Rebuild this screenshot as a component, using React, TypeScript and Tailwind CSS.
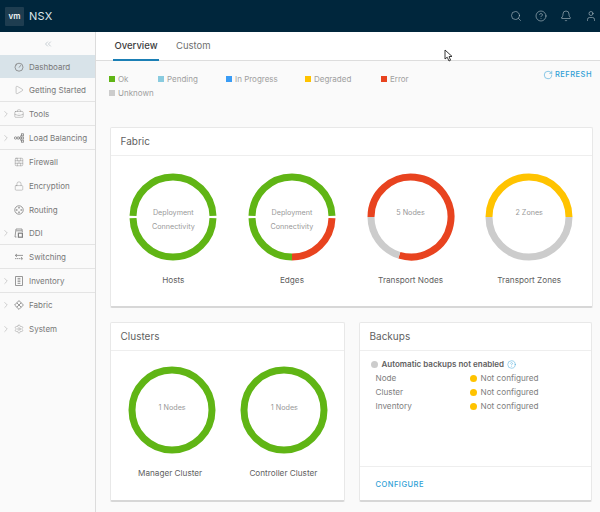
import React from 'react';
import { Search, CircleHelp, Bell, User, ChevronsLeft, ChevronRight, Play, BriefcaseBusiness, BrickWall, Lock, Settings, RotateCw } from 'lucide-react';

const GREEN = '#60b515';
const RED = '#e8431f';
const YELLOW = '#ffc300';
const GREY = '#cccccc';

type IconProps = { className?: string };

function Svg({ className, children }: IconProps & { children: React.ReactNode }) {
  return (
    <svg className={className} width="10" height="10" viewBox="0 0 10 10" fill="none" stroke="currentColor" strokeWidth="0.8">
      {children}
    </svg>
  );
}

const DashIcon = ({ className }: IconProps) => (
  <Svg className={className}>
    <circle cx="5" cy="5.2" r="4" />
    <path d="M5 5.6 L6.8 3.2 M2 2.4 L3 3.2" />
  </Svg>
);
const BalanceIcon = ({ className }: IconProps) => (
  <Svg className={className}>
    <circle cx="1.6" cy="5" r="1.2" />
    <circle cx="4.2" cy="5" r="1.2" />
    <path d="M5.4 5 L7.5 1.8 M5.4 5 H7.5 M5.4 5 L7.5 8.2" />
    <rect x="7.5" y="0.8" width="2" height="2" />
    <rect x="7.5" y="4" width="2" height="2" />
    <rect x="7.5" y="7.2" width="2" height="2" />
  </Svg>
);
const RouteIcon = ({ className }: IconProps) => (
  <Svg className={className}>
    <circle cx="5" cy="5" r="4.2" />
    <circle cx="5" cy="2.8" r="0.5" />
    <circle cx="5" cy="7.2" r="0.5" />
    <circle cx="2.8" cy="5" r="0.5" />
    <circle cx="7.2" cy="5" r="0.5" />
  </Svg>
);
const DdiIcon = ({ className }: IconProps) => (
  <Svg className={className}>
    <path d="M2.5 9 H1 L2 1 H8 L8.4 4" />
    <path d="M2.2 2.8 H8" />
    <rect x="4.4" y="5.2" width="4" height="4" strokeWidth="1.2" />
  </Svg>
);
const SwitchIcon = ({ className }: IconProps) => (
  <Svg className={className}>
    <path d="M9 3.4 H1.5 M3 2 L1.2 3.4 L3 4.8" />
    <path d="M1 6.6 H8.5 M7 5.2 L8.8 6.6 L7 8" strokeDasharray="1.4 0.5" />
  </Svg>
);
const InvIcon = ({ className }: IconProps) => (
  <Svg className={className}>
    <rect x="1.6" y="0.6" width="6.8" height="8.8" />
    <path d="M3.6 2.4 H6.4 M3.6 4 H6.4 M3.6 5.6 H6.4 M3.6 7.4 H6.4" />
  </Svg>
);
const FabricIcon = ({ className }: IconProps) => (
  <Svg className={className}>
    <path d="M5 0.6 L9.4 5 L5 9.4 L0.6 5 Z" />
    <path d="M2.8 2.8 L7.2 7.2 M7.2 2.8 L2.8 7.2" />
  </Svg>
);

const lucideProps = { size: 10, strokeWidth: 1 };

const navItems = [
  { label: 'Dashboard', icon: DashIcon, active: true, h: 'h-[23px]' },
  { label: 'Getting Started', icon: (p: IconProps) => <Play {...lucideProps} {...p} />, border: true, h: 'h-[24px]' },
  { label: 'Tools', icon: (p: IconProps) => <BriefcaseBusiness {...lucideProps} {...p} />, arrow: true, border: true, h: 'h-[24px]' },
  { label: 'Load Balancing', icon: BalanceIcon, arrow: true, border: true, h: 'h-[24px]' },
  { label: 'Firewall', icon: (p: IconProps) => <BrickWall {...lucideProps} {...p} />, h: 'h-[24px]' },
  { label: 'Encryption', icon: (p: IconProps) => <Lock {...lucideProps} {...p} />, h: 'h-[24px]' },
  { label: 'Routing', icon: RouteIcon, h: 'h-[23px]' },
  { label: 'DDI', icon: DdiIcon, arrow: true, border: true, h: 'h-[24px]' },
  { label: 'Switching', icon: SwitchIcon, border: true, h: 'h-[24px]' },
  { label: 'Inventory', icon: InvIcon, arrow: true, border: true, h: 'h-[24px]' },
  { label: 'Fabric', icon: FabricIcon, arrow: true, h: 'h-[24px]' },
  { label: 'System', icon: (p: IconProps) => <Settings {...lucideProps} {...p} />, arrow: true, h: 'h-[23px]' },
];

const legend = [
  { label: 'Ok', color: 'bg-[#60b515]', w: 'w-[49px]' },
  { label: 'Pending', color: 'bg-[#89cbdf]', w: 'w-[68px]' },
  { label: 'In Progress', color: 'bg-[#3a9cf5]', w: 'w-[79px]' },
  { label: 'Degraded', color: 'bg-[#ffc300]', w: 'w-[76px]' },
  { label: 'Error', color: 'bg-[#e8431f]', w: 'w-[60px]' },
  { label: 'Unknown', color: 'bg-[#cccccc]', w: 'w-[80px]' },
];

// angles in degrees, clockwise from 12 o'clock
function arc(from: number, to: number) {
  const r = 40;
  const pt = (a: number) => {
    const t = ((a - 90) * Math.PI) / 180;
    return `${44 + r * Math.cos(t)} ${44 + r * Math.sin(t)}`;
  };
  return `M ${pt(from)} A ${r} ${r} 0 ${to - from > 180 ? 1 : 0} 1 ${pt(to)}`;
}

type Seg = [number, number, string];

function Donut({ segs, lines, label, textTop = 'top-[33px]', labelShift = '' }: { segs: Seg[]; lines: string[]; label: string; textTop?: string; labelShift?: string }) {
  return (
    <div className="flex flex-col items-center">
      <div className="relative w-[88px] h-[88px]">
        <svg width="88" height="88" viewBox="0 0 88 88">
          {segs.map((s, i) => (
            <path key={i} d={arc(s[0], s[1])} fill="none" stroke={s[2]} strokeWidth="7" />
          ))}
        </svg>
        <div className={`absolute inset-x-0 ${textTop} text-center text-[7.2px] leading-[14px] text-[#999999]`}>
          {lines.map((l) => (
            <div key={l}>{l}</div>
          ))}
        </div>
      </div>
      <div className={`mt-[12px] text-[8.2px] leading-[14px] text-[#5f5f5f] whitespace-nowrap ${labelShift}`}>{label}</div>
    </div>
  );
}

function Card({ title, className, children }: { title: string; className: string; children: React.ReactNode }) {
  return (
    <div className={`bg-white rounded-[2px] border border-[#e8e8e8] border-b-[2px] border-b-[#d7d7d7] flex flex-col ${className}`}>
      <div className="h-[28px] shrink-0 border-b border-[#eeeeee] px-[10px] flex items-center text-[10px] text-[#5f5f5f]">{title}</div>
      {children}
    </div>
  );
}

function BackupRow({ name }: { name: string }) {
  return (
    <div className="flex items-center h-[14px] pl-[16px] text-[8.2px] text-[#808080]">
      <span className="w-[94px]">{name}</span>
      <span className="w-[7px] h-[7px] rounded-full bg-[#ffc300] mr-[4px]" />
      <span>Not configured</span>
    </div>
  );
}

export default function App() {
  return (
    <div className="relative w-[600px] h-[512px] overflow-hidden bg-[#fafafa] font-['Inter',sans-serif]">
      <header className="h-[32px] bg-[#00263c] flex items-center">
        <div className="ml-[5px] w-[19px] h-[19px] rounded-[1px] bg-[#1e3d50] flex items-center justify-center text-[#eef2f4] text-[8px] font-semibold">vm</div>
        <div className="ml-[5px] text-[11px] tracking-wide text-[#dfe6ea]">NSX</div>
        <div className="ml-auto flex items-center gap-[13px] pr-[3px] text-[#b6c3ca]">
          <Search size={12} strokeWidth={1.2} />
          <CircleHelp size={12} strokeWidth={1.2} />
          <Bell size={12} strokeWidth={1.2} />
          <User size={12} strokeWidth={1.2} />
        </div>
      </header>

      <div className="flex h-[480px]">
        <aside className="w-[96px] shrink-0 border-r border-[#dcdcdc] bg-[#fafafa]">
          <div className="h-[23px] flex items-center justify-center text-[#8a9aa5]">
            <ChevronsLeft size={10} strokeWidth={1.1} />
          </div>
          {navItems.map((item) => {
            const Icon = item.icon;
            return (
              <div
                key={item.label}
                className={`${item.h} flex items-center relative text-[8px] text-[#787878] ${item.active ? 'bg-[#d8e3e9]' : ''} ${item.border ? 'border-b border-[#e4e4e4]' : ''}`}
              >
                {item.arrow && <ChevronRight size={10} strokeWidth={1} className="absolute left-[1px] text-[#8c8c8c]" />}
                <Icon className="ml-[14px] mr-[5px] text-[#808080]" />
                <span className="whitespace-nowrap">{item.label}</span>
              </div>
            );
          })}
        </aside>

        <main className="flex-1">
          <div className="h-[29px] bg-white border-b border-[#dddddd] flex items-end pl-[17px] text-[9.5px]">
            <div className="w-[46px] h-[28px] flex items-center justify-center border-b-[2px] border-[#1b7fb5] text-[#3d3d3d] font-medium -mb-px">Overview</div>
            <div className="ml-[17px] h-[28px] flex items-center text-[#6f6f6f]">Custom</div>
          </div>

          <div className="flex h-[66px] pl-[13px]">
            <div className="w-[350px] flex flex-wrap content-start pt-[11px]">
              {legend.map((l) => (
                <div key={l.label} className={`${l.w} h-[14px] flex items-center text-[8px] text-[#a0a0a0]`}>
                  <span className={`w-[6px] h-[6px] mr-[3px] ${l.color}`} />
                  {l.label}
                </div>
              ))}
            </div>
            <div className="ml-auto pr-[8px] pt-[8px] flex items-start gap-[2px] text-[#2f9fd6] text-[7.5px] font-medium tracking-[0.5px]">
              <RotateCw size={10} strokeWidth={1.3} className="mt-[1px]" />
              <span className="leading-[12px]">REFRESH</span>
            </div>
          </div>

          <div className="pl-[13.5px] pr-[7.5px] flex flex-col gap-[14px]">
            <Card title="Fabric" className="h-[181px]">
              <div className="grid grid-cols-4 pl-[3.5px] pr-[3px] pt-[17px]">
                <Donut label="Hosts" lines={['Deployment', 'Connectivity']} segs={[[-88.5, 88.5, GREEN], [91.5, 268.5, GREEN]]} />
                <Donut label="Edges" lines={['Deployment', 'Connectivity']} segs={[[-88.5, 88.5, GREEN], [91.5, 180, RED], [180, 268.5, GREEN]]} />
                <Donut label="Transport Nodes" lines={['5 Nodes']} segs={[[-90, 197, RED], [197, 270, GREY]]} />
                <Donut label="Transport Zones" lines={['2 Zones']} segs={[[-90, 90, YELLOW], [90, 270, GREY]]} />
              </div>
            </Card>

            <div className="grid grid-cols-[235px_233.5px] gap-[14px]">
              <Card title="Clusters" className="h-[180px]">
                <div className="grid grid-cols-2 pl-[5.5px] pr-[3px] pt-[15px]">
                  <Donut label="Manager Cluster" lines={['1 Nodes']} textTop="top-[35px]" labelShift="-translate-x-[2px]" segs={[[0, 180, GREEN], [180, 360, GREEN]]} />
                  <Donut label="Controller Cluster" lines={['1 Nodes']} textTop="top-[35px]" labelShift="-translate-x-[1px]" segs={[[0, 180, GREEN], [180, 360, GREEN]]} />
                </div>
              </Card>
              <Card title="Backups" className="h-[180px]">
                <div className="flex-1 pt-[6px]">
                  <div className="flex items-center h-[14px] pl-[11px] text-[8px] font-semibold text-[#5f5f5f]">
                    <span className="w-[7px] h-[7px] rounded-full bg-[#cccccc] mr-[4px]" />
                    Automatic backups not enabled
                    <CircleHelp size={9} strokeWidth={1.2} className="ml-[3px] text-[#2f9fd6]" />
                  </div>
                  <BackupRow name="Node" />
                  <BackupRow name="Cluster" />
                  <BackupRow name="Inventory" />
                </div>
                <div className="h-[34px] border-t border-[#eeeeee] pl-[16px] pt-[2px] flex items-center text-[7.5px] font-medium tracking-[0.5px] text-[#2f9fd6]">CONFIGURE</div>
              </Card>
            </div>
          </div>
        </main>
      </div>

      <svg className="absolute left-[444px] top-[49px]" width="10" height="14" viewBox="0 0 10 14">
        <path d="M1 1 L1 10 L3.2 8.2 L5 12 L6.6 11.2 L5 7.6 L8 7.4 Z" fill="#ffffff" stroke="#222222" strokeWidth="0.9" />
      </svg>
    </div>
  );
}
